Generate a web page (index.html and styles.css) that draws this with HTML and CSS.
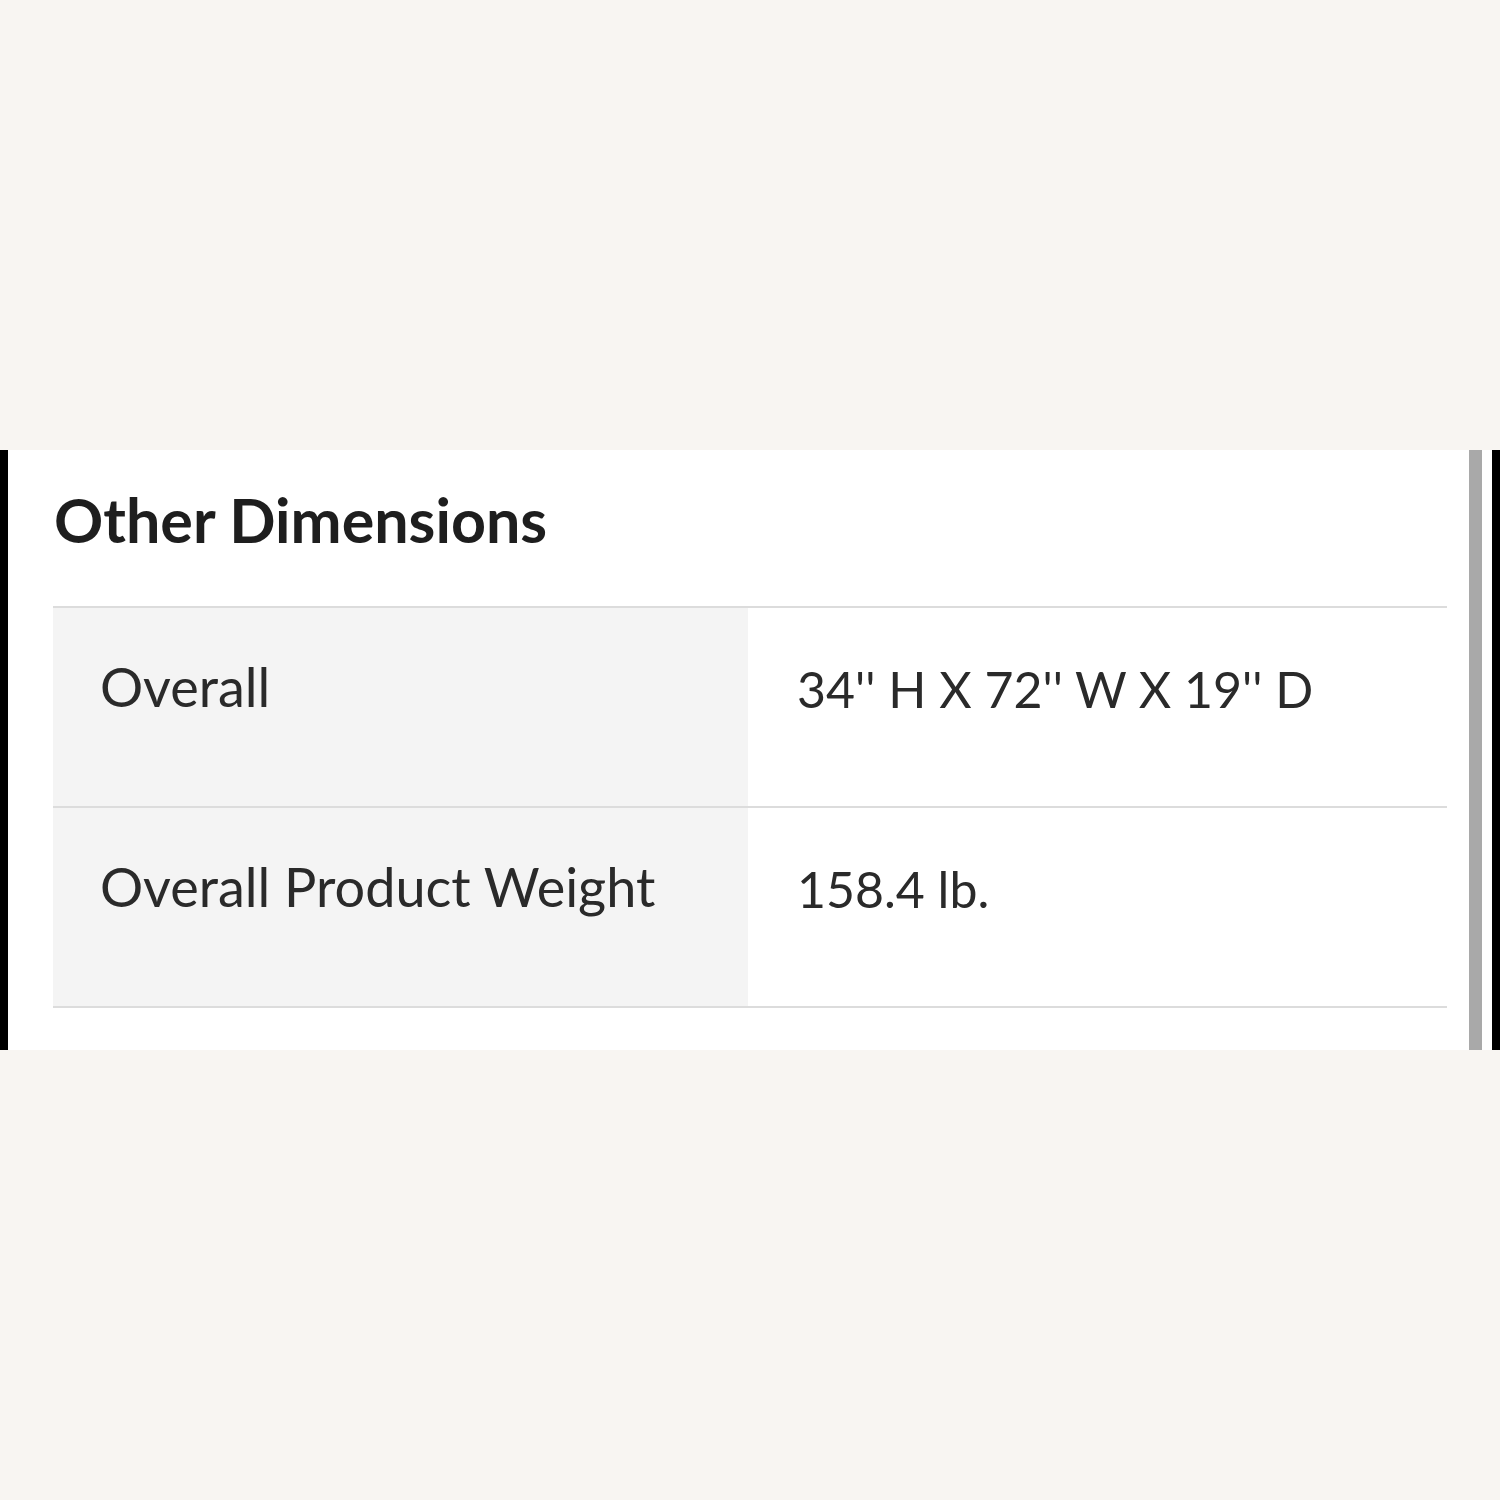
FILE: index.html
```html
<!DOCTYPE html>
<html>
<head>
<meta charset="utf-8">
<link rel="stylesheet" href="styles.css">
</head>
<body>
<div class="panel">
  <div class="edge"></div>
  <div class="content">
    <h2 class="title">Other Dimensions</h2>
    <div class="table">
      <div class="row">
        <div class="label">Overall</div>
        <div class="value">34'' H X 72'' W X 19'' D</div>
      </div>
      <div class="row">
        <div class="label">Overall Product Weight</div>
        <div class="value">158.4 lb.</div>
      </div>
    </div>
  </div>
  <div class="scrollbar"></div>
  <div class="gap"></div>
  <div class="edge"></div>
</div>
</body>
</html>
```
FILE: styles.css
```css
html, body {
  margin: 0;
  padding: 0;
  background: #f8f5f2;
}
body {
  padding-top: 450px;
  height: 1500px;
  box-sizing: border-box;
  font-family: "Lato", "Noto Sans", sans-serif;
  color: #222;
}
.panel {
  display: flex;
  height: 600px;
  background: #fff;
}
.edge {
  width: 8px;
  background: #000;
}
.content {
  flex: 1;
  padding: 0 22px 0 45px;
}
.scrollbar {
  width: 13px;
  background: #a9a9a9;
}
.gap {
  width: 10px;
  background: #fff;
}
.title {
  margin: 0;
  padding-top: 35px;
  height: 156px;
  box-sizing: border-box;
  font-size: 61px;
  line-height: 70px;
  font-weight: 700;
  color: #1e1e1e;
  padding-left: 1px;
}
.table {
  border-top: 2px solid #dcdcdc;
}
.row {
  display: flex;
  height: 198px;
  border-bottom: 2px solid #dcdcdc;
}
.label {
  width: 695px;
  box-sizing: border-box;
  background: #f4f4f4;
  padding: 49px 0 0 47px;
  font-size: 54px;
  line-height: 60px;
  color: #2a2a2a;
}
.value {
  flex: 1;
  padding: 51px 0 0 49px;
  font-size: 50px;
  line-height: 60px;
  color: #2a2a2a;
}
```
